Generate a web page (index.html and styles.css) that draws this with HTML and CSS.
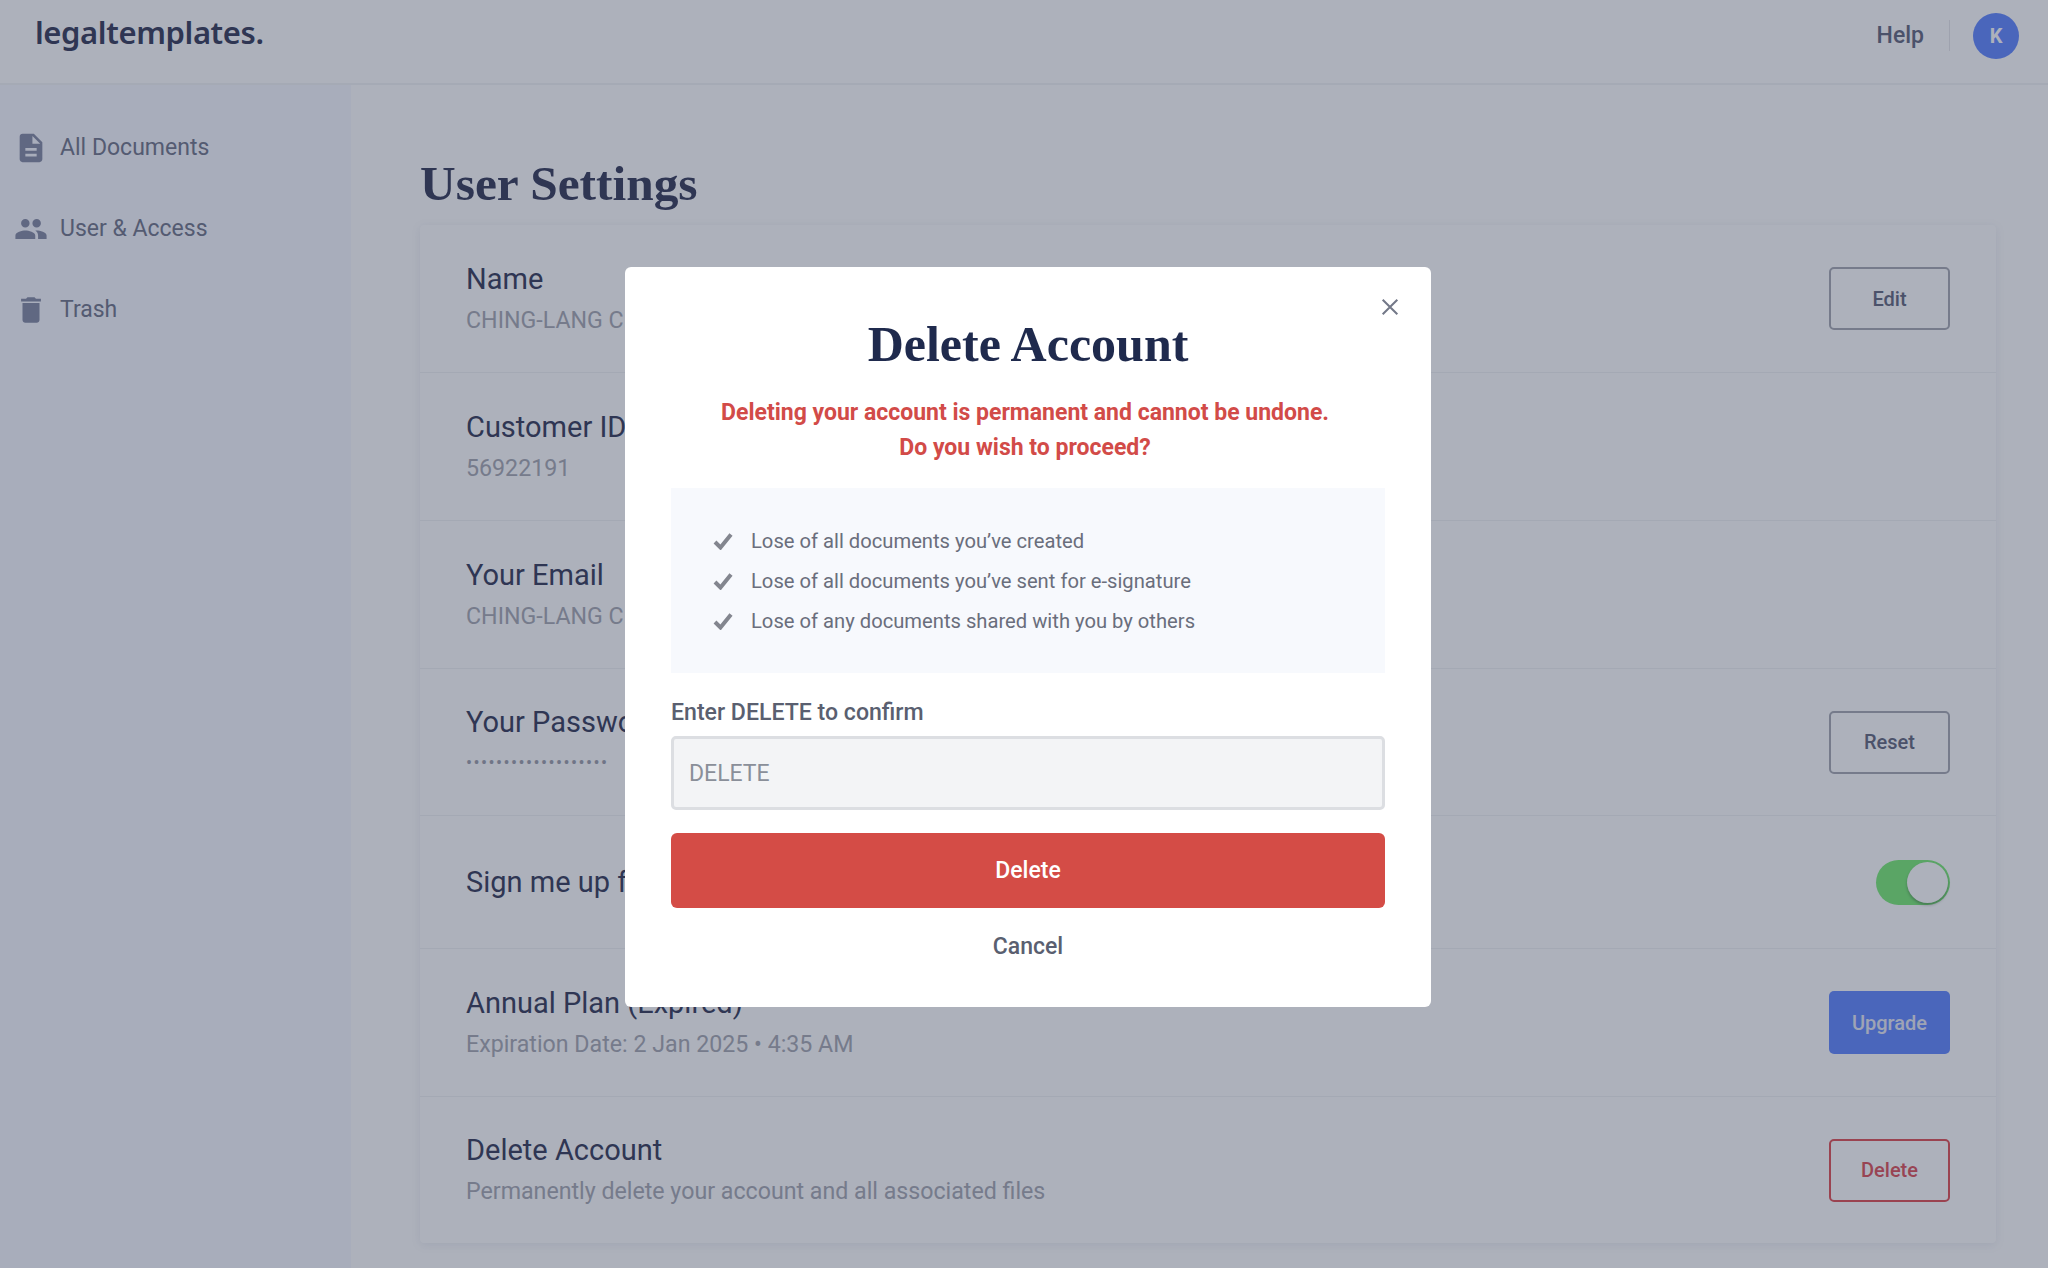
FILE: index.html
```html
<!DOCTYPE html>
<html lang="en">
<head>
<meta charset="utf-8">
<title>User Settings</title>
<link rel="stylesheet" href="styles.css">
</head>
<body>
<div class="page">
  <header class="topbar">
    <div class="logo">legaltemplates.</div>
    <div class="top-right">
      <span class="help">Help</span>
      <span class="divider"></span>
      <span class="avatar">K</span>
    </div>
  </header>
  <div class="body-wrap">
    <nav class="sidebar">
      <a class="nav-item">
        <svg class="nav-icon" viewBox="0 0 24 24"><path d="M14 2H6c-1.1 0-1.99.9-1.99 2L4 20c0 1.1.89 2 1.99 2H18c1.1 0 2-.9 2-2V8l-6-6zm2 16H8v-2h8v2zm0-4H8v-2h8v2zm-3-5V3.5L18.5 9H13z"/></svg>
        <span>All Documents</span>
      </a>
      <a class="nav-item">
        <svg class="nav-icon" viewBox="0 0 24 24"><path d="M16 11c1.66 0 2.99-1.34 2.99-3S17.66 5 16 5c-1.66 0-3 1.34-3 3s1.34 3 3 3zm-8 0c1.66 0 2.99-1.34 2.99-3S9.66 5 8 5C6.34 5 5 6.34 5 8s1.34 3 3 3zm0 2c-2.33 0-7 1.17-7 3.5V19h14v-2.5c0-2.33-4.67-3.5-7-3.5zm8 0c-.29 0-.62.02-.97.05 1.16.84 1.97 1.97 1.97 3.45V19h6v-2.5c0-2.33-4.67-3.5-7-3.5z"/></svg>
        <span>User &amp; Access</span>
      </a>
      <a class="nav-item">
        <svg class="nav-icon" viewBox="0 0 24 24"><path d="M6 19c0 1.1.9 2 2 2h8c1.1 0 2-.9 2-2V7H6v12zM19 4h-3.5l-1-1h-5l-1 1H5v2h14V4z"/></svg>
        <span>Trash</span>
      </a>
    </nav>
    <main class="content">
      <h1 class="page-title">User Settings</h1>
      <section class="card">
        <div class="row">
          <div class="row-text"><div class="row-title">Name</div><div class="row-sub">CHING-LANG C</div></div>
          <button class="btn btn-outline">Edit</button>
        </div>
        <div class="row">
          <div class="row-text"><div class="row-title">Customer ID</div><div class="row-sub">56922191</div></div>
        </div>
        <div class="row">
          <div class="row-text"><div class="row-title">Your Email</div><div class="row-sub">CHING-LANG C</div></div>
        </div>
        <div class="row row-password">
          <div class="row-text"><div class="row-title">Your Password</div><div class="row-dots">•••••••••••••••••••</div></div>
          <button class="btn btn-outline">Reset</button>
        </div>
        <div class="row row-short">
          <div class="row-text"><div class="row-title">Sign me up for</div></div>
          <span class="toggle"><span class="knob"></span></span>
        </div>
        <div class="row">
          <div class="row-text"><div class="row-title">Annual Plan (Expired)</div><div class="row-sub">Expiration Date: 2 Jan 2025 • 4:35 AM</div></div>
          <button class="btn btn-primary">Upgrade</button>
        </div>
        <div class="row">
          <div class="row-text"><div class="row-title">Delete Account</div><div class="row-sub">Permanently delete your account and all associated files</div></div>
          <button class="btn btn-danger">Delete</button>
        </div>
      </section>
    </main>
  </div>
</div>

<div class="overlay">
  <div class="modal">
    <svg class="close" viewBox="0 0 16 16"><path d="M1.5 1.5l13 13M14.5 1.5l-13 13"/></svg>
    <h2 class="modal-title">Delete Account</h2>
    <p class="warning">Deleting your account is permanent and cannot be undone.<br>Do you wish to proceed?</p>
    <ul class="loss-list">
      <li class="loss-item"><svg class="check" viewBox="0 0 20 18"><path d="M2 10l5.5 5.5L18 2.5"/></svg>Lose of all documents you’ve created</li>
      <li class="loss-item"><svg class="check" viewBox="0 0 20 18"><path d="M2 10l5.5 5.5L18 2.5"/></svg>Lose of all documents you’ve sent for e-signature</li>
      <li class="loss-item"><svg class="check" viewBox="0 0 20 18"><path d="M2 10l5.5 5.5L18 2.5"/></svg>Lose of any documents shared with you by others</li>
    </ul>
    <label class="field-label" for="confirm">Enter DELETE to confirm</label>
    <input class="field" id="confirm" type="text" placeholder="DELETE">
    <button class="btn-delete">Delete</button>
    <div class="cancel">Cancel</div>
  </div>
</div>
</body>
</html>
```
FILE: styles.css
```css
* { box-sizing: border-box; }
html, body { margin: 0; height: 100%; overflow: hidden; }
body { font-family: Roboto, "Liberation Sans", sans-serif; background: #fff; color: #2d3253; }

.page { height: 1268px; display: flex; flex-direction: column; }

.topbar {
  height: 85px; flex: none; display: flex; align-items: center; justify-content: space-between;
  padding: 0 29px 12px 35px; background: #fff; border-bottom: 2px solid #f2f3f5;
}
.logo { margin-bottom: 7px; font-family: "Noto Sans", "Open Sans", sans-serif; font-weight: 600; font-size: 31px; letter-spacing: -0.4px; color: #2d3253; }
.top-right { display: flex; align-items: center; }
.help { font-size: 23px; font-weight: 500; color: #5c6178; }
.divider { width: 1px; height: 31px; background: #e6e7ea; margin: 0 23px 0 25px; }
.avatar {
  width: 46px; height: 46px; border-radius: 50%; background: #5a82ff; color: #fff;
  display: flex; align-items: center; justify-content: center; font-size: 20px; font-weight: 700;
}

.body-wrap { flex: 1; display: flex; min-height: 0; }
.sidebar { width: 351px; flex: none; background: #f7f8ff; padding: 22px 0 0 14px; }
.nav-item { height: 81px; display: flex; align-items: center; gap: 12px; font-size: 23px; color: #6b7085; }
.nav-icon { width: 34px; height: 34px; fill: #7f85a0; flex: none; }

.content { flex: 1; padding: 0 52px 0 69px; }
.page-title {
  margin: 0; height: 140px; padding-top: 69px; font-family: "Liberation Serif", serif; font-weight: 700;
  font-size: 49.4px; line-height: 60px; color: #2d3253;
}
.card { background: #fff; border-radius: 4px; box-shadow: 0 2px 10px rgba(90, 100, 140, 0.12); }
.row {
  height: 148px; display: flex; align-items: center; justify-content: space-between;
  padding: 0 46px; border-bottom: 1px solid #f1f2f4;
}
.row:last-child { border-bottom: 0; height: 146px; }
.row-password { height: 147px; }
.row-short { height: 133px; }
.row-text { display: flex; flex-direction: column; gap: 6px; }
.row-title { font-size: 29px; line-height: 36px; color: #2d3253; }
.row-sub { font-size: 23.2px; line-height: 34px; color: #a3a5af; }
.row-dots { font-size: 18px; line-height: 34px; letter-spacing: 1.43px; color: #9a9ca8; }

.btn {
  width: 121px; height: 63px; border-radius: 5px; font-family: inherit; font-size: 20px; font-weight: 500; background: transparent;
}
.btn-outline { border: 2px solid #a3a5af; color: #5c6178; }
.btn-primary { border: 0; background: #5a82ff; color: #e6e9f5; }
.btn-danger { border: 2px solid #e0484e; color: #dc4a52; }
.toggle {
  width: 74px; height: 45px; border-radius: 23px; background: #75eb71; display: flex; align-items: center; justify-content: flex-end; padding-right: 2px;
}
.knob { width: 41px; height: 41px; border-radius: 50%; background: #fff; box-shadow: 0 2px 3px rgba(0, 0, 0, 0.3); }

.overlay { position: fixed; inset: 0; background: rgba(50, 60, 85, 0.4); display: flex; align-items: flex-start; }
.modal {
  position: relative; width: 806px; height: 740px; margin: 267px 0 0 625px; padding: 0 46px;
  background: #fff; border-radius: 6px; display: flex; flex-direction: column;
}
.close { position: absolute; top: 31px; right: 32px; width: 18px; height: 18px; fill: none; stroke: #737888; stroke-width: 1.8; }
.modal-title {
  margin: 47px 0 0; font-family: "Liberation Serif", serif; font-weight: 700; font-size: 50px; line-height: 60px;
  text-align: center; color: #1f2a4d;
}
.warning {
  margin: 22px 0 0; text-align: center; font-size: 23px; font-weight: 700; line-height: 34.5px; color: #d24b48;
  transform: translateX(-3px);
}
.loss-list {
  list-style: none; margin: 23px 0 0; padding: 33px 0 0 42px; height: 185px; background: #f7f9fd;
}
.loss-item { height: 40px; display: flex; align-items: center; gap: 18px; font-size: 20.2px; color: #6a6e7c; }
.check { width: 20px; height: 18px; flex: none; fill: none; stroke: #83868f; stroke-width: 4; }
.field-label { margin-top: 25px; font-size: 23.1px; line-height: 30px; font-weight: 500; color: #5a5f70; }
.field {
  margin-top: 8px; height: 74px; flex: none; width: 100%; padding: 0 15px; border: 3px solid #dcdee2; border-radius: 5px;
  background: #f3f4f6; font-family: inherit; font-size: 23px; outline: 0;
}
.field::placeholder { color: #8a8f99; opacity: 1; }
.btn-delete {
  margin-top: 23px; height: 75px; flex: none; border: 0; border-radius: 6px; background: #d44c46; color: #fff;
  font-family: inherit; font-size: 23px; font-weight: 500;
}
.cancel { margin-top: 24px; text-align: center; font-size: 23px; line-height: 30px; font-weight: 500; color: #5a5f70; }
```
